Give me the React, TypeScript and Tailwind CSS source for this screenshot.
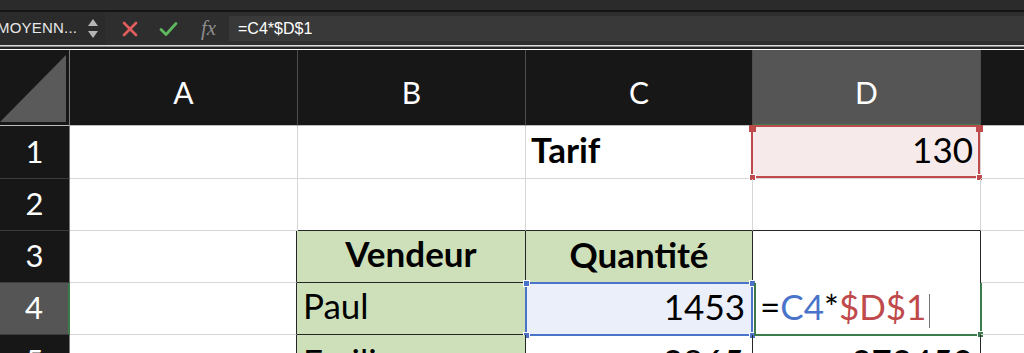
import type { ReactNode } from "react";

const grid = "border-r border-b border-[#d6d6d6]";

function Handle({ className }: { className: string }) {
  return <div className={`absolute w-[7px] h-[7px] ${className}`} />;
}

function Cell({
  w,
  className = "",
  children,
}: {
  w: string;
  className?: string;
  children?: ReactNode;
}) {
  return (
    <div className={`relative shrink-0 h-full box-border flex items-end ${w} ${className}`}>
      {children}
    </div>
  );
}

function RowHead({ n, active = false, cut = false }: { n: number; active?: boolean; cut?: boolean }) {
  return (
    <div
      className={`shrink-0 w-[70px] box-border flex justify-center text-white text-[31px] leading-none border-b border-[#3c3c3c] ${
        cut ? "h-[52px] items-start pt-[10px]" : "h-full items-end pb-[11px]"
      } ${active ? "bg-[#555555] border-r-2 border-r-[#3e7b4b]" : "bg-[#171717] border-r border-r-[#777777]"}`}
    >
      {n}
    </div>
  );
}

function FormulaBar() {
  return (
    <div className="h-[50px] flex flex-col" style={{ fontFamily: '"Liberation Sans", Arial, sans-serif' }}>
      <div className="h-[10px] bg-[#2b2b2b]" />
      <div className="h-[2px] bg-[#151515]" />
      <div className="h-[33px] bg-[#2e2e2e] flex items-center">
        <div className="w-[105px] h-full flex items-center bg-[#2b2b2b]">
          <span className="-ml-[3px] text-[15px] text-[#e8e8e8] tracking-[0.2px]">MOYENN...</span>
          <div className="ml-auto mr-[7px] flex flex-col items-center gap-[5px]">
            <svg width="10" height="7" viewBox="0 0 10 7"><path d="M5 0 L10 7 L0 7 Z" fill="#b5b5b5" /></svg>
            <svg width="10" height="7" viewBox="0 0 10 7"><path d="M0 0 L10 0 L5 7 Z" fill="#b5b5b5" /></svg>
          </div>
        </div>
        <div className="w-[124px] h-full flex items-center">
          <svg className="ml-[17px]" width="16" height="16" viewBox="0 0 16 16">
            <path d="M2 2 L14 14 M14 2 L2 14" stroke="#e35d5d" strokeWidth="2.6" strokeLinecap="round" />
          </svg>
          <svg className="ml-[21px]" width="19" height="16" viewBox="0 0 19 16">
            <path d="M2 8.5 L7 13.5 L17 2.5" stroke="#5db85e" strokeWidth="2.8" fill="none" strokeLinecap="round" strokeLinejoin="round" />
          </svg>
          <span
            className="ml-[23px] text-[21px] italic text-[#8c8c8c]"
            style={{ fontFamily: '"Liberation Serif", "Times New Roman", serif' }}
          >
            fx
          </span>
        </div>
        <div className="flex-1 h-[25px] bg-[#393939] flex items-center pl-[9px] text-[16px] text-white">
          =C4*$D$1
        </div>
      </div>
      <div className="h-[1px] bg-[#d9d9d9]" />
      <div className="h-[1px] bg-[#8a8a8a]" />
      <div className="h-[2px] bg-[#262626]" />
    </div>
  );
}

function HeaderRow() {
  const cols = [
    { l: "A", w: "w-[228px]" },
    { l: "B", w: "w-[228px]" },
    { l: "C", w: "w-[227px]" },
  ];
  return (
    <div className="h-[76px] flex bg-[#171717] text-white text-[30px] leading-none">
      <div className="shrink-0 w-[70px] h-full box-border border-r border-[#7a7a7a] border-b border-b-[#bdbdbd]">
        <svg width="69" height="75" viewBox="0 0 69 75">
          <path d="M0 72 L66 5 L66 72 Z" fill="#5a5a5a" />
        </svg>
      </div>
      {cols.map((c) => (
        <div
          key={c.l}
          className={`shrink-0 ${c.w} h-full box-border border-r border-[#4d4d4d] border-b border-b-[#bdbdbd] flex items-center justify-center pt-[9px]`}
        >
          {c.l}
        </div>
      ))}
      <div className="shrink-0 w-[228px] h-full box-border bg-[#555555] border-r border-[#4d4d4d] border-b-2 border-b-[#3e7b4b] flex items-center justify-center pt-[9px]">
        D
      </div>
      <div className="flex-1 h-full box-border border-b border-b-[#bdbdbd]" />
    </div>
  );
}

export default function App() {
  const txt = "pb-[11px] text-[35px] leading-none text-black";
  return (
    <div
      className="w-[1024px] h-[353px] overflow-hidden bg-white"
      style={{ fontFamily: 'Lato, "Noto Sans", sans-serif' }}
    >
      <FormulaBar />
      <HeaderRow />

      {/* row 1 */}
      <div className="h-[53px] flex">
        <RowHead n={1} />
        <Cell w="w-[228px]" className={grid} />
        <Cell w="w-[228px]" className={grid} />
        <Cell w="w-[227px]" className={`${grid} pl-[5px] ${txt} font-bold`}>
          Tarif
        </Cell>
        <Cell w="w-[228px]" className={`${grid} bg-[#f6eaea] justify-end pr-[7px] ${txt}`}>
          130
          <div className="absolute -left-[2px] -top-[1px] right-0 bottom-0 border-2 border-[#bf4a4c]" />
          <Handle className="-left-[4px] -top-[1px] h-[4px] bg-[#bf4a4c]" />
          <Handle className="-right-[3px] -top-[1px] h-[4px] bg-[#bf4a4c]" />
          <Handle className="-left-[4px] -bottom-[3px] bg-[#bf4a4c] border border-white" />
          <Handle className="-right-[3px] -bottom-[3px] bg-[#bf4a4c] border border-white" />
        </Cell>
        <Cell w="flex-1" className="border-b border-[#d6d6d6]" />
      </div>

      {/* row 2 */}
      <div className="h-[52px] flex">
        <RowHead n={2} />
        <Cell w="w-[228px]" className={grid} />
        <Cell w="w-[228px]" className="border-r border-[#d6d6d6] border-b border-b-[#262626]" />
        <Cell w="w-[227px]" className="border-r border-[#d6d6d6] border-b border-b-[#262626]" />
        <Cell w="w-[228px]" className="border-r border-[#d6d6d6] border-b border-b-[#262626]" />
        <Cell w="flex-1" className="border-b border-[#d6d6d6]" />
      </div>

      {/* row 3 */}
      <div className="h-[52px] flex">
        <RowHead n={3} />
        <Cell w="w-[227px]" className="border-r border-[#262626] border-b border-b-[#d6d6d6]" />
        <Cell w="w-[229px]" className={`bg-[#cde0b9] border-r border-b border-[#262626] justify-center ${txt} font-bold`}>
          Vendeur
        </Cell>
        <Cell w="w-[227px]" className={`bg-[#cde0b9] border-r border-[#262626] justify-center ${txt} font-bold`}>
          Quantité
        </Cell>
        <Cell w="w-[228px]" className="border-r border-[#262626]" />
        <Cell w="flex-1" className="border-b border-[#d6d6d6]" />
      </div>

      {/* row 4 */}
      <div className="h-[52px] flex">
        <RowHead n={4} active />
        <Cell w="w-[227px]" className="border-r border-[#262626] border-b border-b-[#d6d6d6]" />
        <Cell w="w-[229px]" className={`bg-[#cde0b9] border-r border-b border-[#262626] pl-[6px] ${txt}`}>
          Paul
        </Cell>
        <Cell w="w-[227px]" className={`bg-[#ebeff9] justify-end pr-[8px] ${txt}`}>
          1453
          <div className="absolute -left-[1px] -top-[1px] right-0 -bottom-[1px] border-2 border-[#4a74c9]" />
          <Handle className="-left-[3px] -top-[3px] bg-[#4a74c9] border border-white" />
          <Handle className="-right-[3px] -top-[3px] bg-[#4a74c9] border border-white" />
          <Handle className="-left-[3px] -bottom-[4px] bg-[#4a74c9] border border-white" />
          <Handle className="-right-[3px] -bottom-[4px] bg-[#4a74c9] border border-white" />
        </Cell>
        <Cell w="w-[228px]" className={`pl-[7px] ${txt}`}>
          <span>=</span>
          <span className="text-[#4a74c9]">C4</span>
          <span>*</span>
          <span className="text-[#c0494b]">$D$1</span>
          <span className="ml-[3px] mb-[-4px] w-[1px] h-[34px] bg-[#777777]" />
          <div className="absolute left-[1px] top-0 -right-[1px] -bottom-[1px] border-2 border-t-0 border-[#3e7b4b]" />
          <Handle className="-right-[3px] -bottom-[3px] bg-[#3e7b4b] border border-white" />
        </Cell>
        <Cell w="flex-1" className="border-b border-[#d6d6d6]" />
      </div>

      {/* row 5 */}
      <div className="h-[18px] flex overflow-hidden">
        <RowHead n={5} cut />
        <Cell w="w-[227px]" className="h-[52px] border-r border-[#262626]" />
        <Cell w="w-[229px]" className={`h-[52px] items-start pt-[9px] bg-[#cde0b9] border-r border-[#262626] pl-[6px] ${txt}`}>
          Emilie
        </Cell>
        <Cell w="w-[227px]" className={`h-[52px] items-start pt-[9px] justify-end pr-[8px] border-r border-[#262626] ${txt}`}>
          2865
        </Cell>
        <Cell w="w-[228px]" className={`h-[52px] items-start pt-[9px] justify-end pr-[7px] border-r border-[#262626] ${txt}`}>
          372450
        </Cell>
        <Cell w="flex-1" />
      </div>
    </div>
  );
}
